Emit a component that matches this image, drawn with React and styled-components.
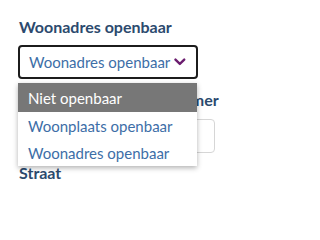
import React from 'react';
import styled, { createGlobalStyle } from 'styled-components';

const GlobalStyle = createGlobalStyle`
  html, body {
    margin: 0;
    padding: 0;
    background: #fff;
  }
  body {
    font-family: 'Lato', 'Open Sans', sans-serif;
  }
`;

const Page = styled.div`
  width: 235px;
  height: 204px;
  overflow: hidden;
  padding: 17px 0 0 19px;
  box-sizing: border-box;
`;

const Label = styled.div`
  font-size: 16px;
  line-height: 20px;
  min-height: 20px;
  font-weight: 700;
  color: #2c4a6e;
  white-space: nowrap;
  text-align: ${p => (p.$right ? 'right' : 'left')};
`;

const SelectWrap = styled.div`
  position: relative;
  margin: 8px 0 0 -1px;
  width: 180px;
`;

const SelectBox = styled.div`
  height: 34px;
  box-sizing: border-box;
  border: 2px solid #1c1c1c;
  border-radius: 4px;
  display: flex;
  align-items: center;
  padding: 0 10px 0 9px;
  gap: 4px;
  font-size: 15px;
  color: #3d6ea7;
  white-space: nowrap;
`;

const Menu = styled.ul`
  position: absolute;
  top: 38px;
  left: 0;
  width: 179px;
  margin: 0;
  padding: 0;
  list-style: none;
  background: #fff;
  box-shadow: 0 2px 5px rgba(0, 0, 0, 0.3);
  z-index: 2;
`;

const Option = styled.li`
  height: ${p => (p.$active ? '29px' : '27px')};
  display: flex;
  align-items: center;
  padding: 0 10px;
  font-size: 15px;
  white-space: nowrap;
  color: ${p => (p.$active ? '#fff' : '#3d6ea7')};
  background: ${p => (p.$active ? '#777777' : 'transparent')};
`;

const Row = styled.div`
  display: grid;
  grid-template-columns: 104px 88px;
  column-gap: 4px;
  margin-top: 11px;
`;

const Field = styled.div`
  display: flex;
  flex-direction: column;
  gap: 9px;
`;

const Input = styled.div`
  height: 34px;
  box-sizing: border-box;
  border: 1px solid #d6d6d6;
  border-radius: 4px;
`;

const StreetLabel = styled(Label)`
  margin-top: 10px;
`;

const Chevron = () => (
  <svg width="12" height="8" viewBox="0 0 12 8" fill="none">
    <path d="M1.5 1.5 L6 6 L10.5 1.5" stroke="#6b1d6f" strokeWidth="2.4" strokeLinecap="round" strokeLinejoin="round" />
  </svg>
);

const options = ['Niet openbaar', 'Woonplaats openbaar', 'Woonadres openbaar'];

export default function App() {
  return (
    <>
      <GlobalStyle />
      <Page>
        <Label>Woonadres openbaar</Label>
        <SelectWrap>
          <SelectBox>
            Woonadres openbaar
            <Chevron />
          </SelectBox>
          <Menu>
            {options.map((o, i) => (
              <Option key={o} $active={i === 0}>{o}</Option>
            ))}
          </Menu>
        </SelectWrap>
        <Row>
          <Field>
            <Label />
            <Input />
          </Field>
          <Field>
            <Label $right>Huisnummer</Label>
            <Input />
          </Field>
        </Row>
        <StreetLabel>Straat</StreetLabel>
      </Page>
    </>
  );
}
